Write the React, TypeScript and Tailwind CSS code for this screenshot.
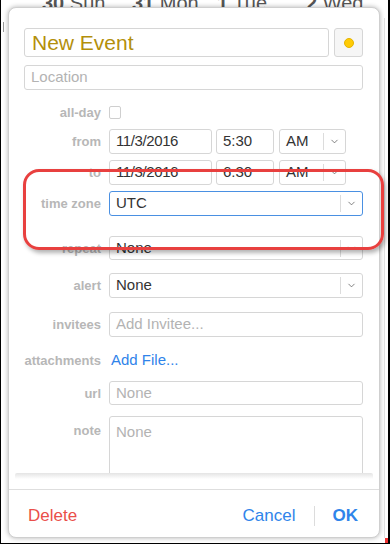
import { ChevronDown } from "lucide-react";

const font = { fontFamily: '"Liberation Sans", Arial, sans-serif' };

const labelCls =
  "w-[77px] shrink-0 text-right text-[13px] font-bold text-[#b7b7b7] leading-none";
const boxCls =
  "border border-[#d6d6d6] rounded-[3px] bg-white flex items-center text-[15px] text-[#333] px-[6px]";

const Select = ({
  value,
  className,
  focus = false,
}: {
  value: string;
  className: string;
  focus?: boolean;
}) => (
  <div
    className={`${className} ${
      focus ? "border-[#4a90e2]" : "border-[#d6d6d6]"
    } border rounded-[3px] bg-white flex items-center text-[15px] text-[#333]`}
  >
    <span className="flex-1 pl-[6px]">{value}</span>
    <span className="h-[17px] w-px bg-[#dcdcdc]" />
    <span className="w-[21px] flex justify-center text-[#555]">
      <ChevronDown size={11} strokeWidth={1.6} />
    </span>
  </div>
);

const Row = ({
  label,
  className,
  children,
  top = false,
}: {
  label: string;
  className: string;
  children: React.ReactNode;
  top?: boolean;
}) => (
  <div className={`flex gap-2 ${top ? "items-start" : "items-center"} ${className}`}>
    <span className={`${labelCls} ${top ? "pt-[8px]" : ""}`}>{label}</span>
    {children}
  </div>
);

const TimeRow = ({ label, time, className }: { label: string; time: string; className: string }) => (
  <Row label={label} className={className}>
    <div className={`${boxCls} w-[103px] h-[25px] tracking-[-0.4px]`}>11/3/2016</div>
    <div className={`${boxCls} w-[58px] h-[25px] -ml-[4px]`}>{time}</div>
    <Select value="AM" className="w-[67px] h-[25px] -ml-[3px]" />
  </Row>
);

export default function App() {
  return (
    <div
      style={font}
      className="relative w-[390px] h-[544px] overflow-hidden bg-white border-l border-r-2 border-b border-black"
    >
      {/* calendar behind */}
      <div className="absolute -top-[12px] left-0 w-full text-[20px] text-[#555]">
        <span className="absolute left-[41px]">
          <b>30</b> Sun
        </span>
        <span className="absolute left-[131px]">
          <b>31</b> Mon
        </span>
        <span className="absolute left-[216px]">
          <b>1</b> Tue
        </span>
        <span className="absolute left-[305px]">
          <b>2</b> Wed
        </span>
      </div>
      <div className="absolute left-[383px] top-[18px] w-px h-[520px] bg-[#e2e2e2]" />
      <div className="absolute left-[2px] top-[22px] w-px h-[10px] bg-[#999]" />
      <div className="absolute left-[384px] top-[538px] w-[4px] h-[6px] bg-[#e33]" />

      {/* popover */}
      <div className="relative mt-[7px] ml-[7px] w-[372px] h-[531px] rounded-[8px] border border-[#cfcfcf] bg-white shadow-[0_0_5px_rgba(0,0,0,0.3)] flex flex-col">
        <div className="h-[465px] overflow-hidden pl-[15px] pr-[16px]">
          <div className="flex gap-[5px] mt-[20px]">
            <div className={`${boxCls} w-[305px] h-[29px] !px-[7px] !text-[21px] !text-[#b38f0b]`}>
              New Event
            </div>
            <div className="w-[29px] h-[29px] rounded-[3px] border border-[#d6d6d6] bg-[#f6f6f6] flex items-center justify-center">
              <span className="w-[10px] h-[10px] rounded-full bg-[#ffcb05] border border-[#e5b400]" />
            </div>
          </div>
          <div className={`${boxCls} mt-[8px] h-[25px] !text-[#b3b3b3]`}>Location</div>

          <Row label="all-day" className="mt-[15px] h-[15px]">
            <span className="w-[12px] h-[13px] rounded-[2px] border border-[#cfcfcf] bg-white" />
          </Row>
          <TimeRow label="from" time="5:30" className="mt-[9px] h-[25px]" />
          <TimeRow label="to" time="6:30" className="mt-[6px] h-[25px]" />
          <Row label="time zone" className="mt-[6px] h-[25px]">
            <Select value="UTC" focus className="flex-1 h-[25px]" />
          </Row>
          <Row label="repeat" className="mt-[20px] h-[24px]">
            <Select value="None" className="flex-1 h-[24px]" />
          </Row>
          <Row label="alert" className="mt-[13px] h-[25px]">
            <Select value="None" className="flex-1 h-[25px]" />
          </Row>
          <Row label="invitees" className="mt-[14px] h-[25px]">
            <div className={`${boxCls} flex-1 h-[25px] !text-[#b3b3b3]`}>Add Invitee...</div>
          </Row>
          <Row label="attachments" className="mt-[12px] h-[22px]">
            <span className="pl-[2px] text-[15px] text-[#2f84ea]">Add File...</span>
          </Row>
          <Row label="url" className="mt-[10px] h-[24px]">
            <div className={`${boxCls} flex-1 h-[24px] !text-[#b3b3b3]`}>None</div>
          </Row>
          <Row label="note" top className="mt-[11px]">
            <div className="flex-1 h-[90px] border border-[#d6d6d6] rounded-[3px] px-[6px] pt-[4px] text-[15px] text-[#b3b3b3]">
              None
            </div>
          </Row>
        </div>
        <div className="mx-[6px] h-[6px] bg-gradient-to-b from-[#e4e4e4] to-white rounded-t-[2px]" />
        <div className="h-[10px]" />
        <div className="border-t border-[#dedede] flex-1 flex items-center pt-[5px] pl-[19px] pr-[21px] text-[17px]">
          <span className="text-[#ea4f4a]">Delete</span>
          <span className="ml-auto text-[#2f84ea]">Cancel</span>
          <span className="mx-[18px] w-px h-[20px] bg-[#dcdcdc]" />
          <span className="font-bold text-[#2f84ea]">OK</span>
        </div>
      </div>

      {/* annotation highlight */}
      <div className="absolute left-[22px] top-[169px] w-[361px] h-[81px] rounded-[16px] border-[3px] border-[#e8403f] shadow-[2px_3px_4px_rgba(0,0,0,0.3)]" />
    </div>
  );
}
